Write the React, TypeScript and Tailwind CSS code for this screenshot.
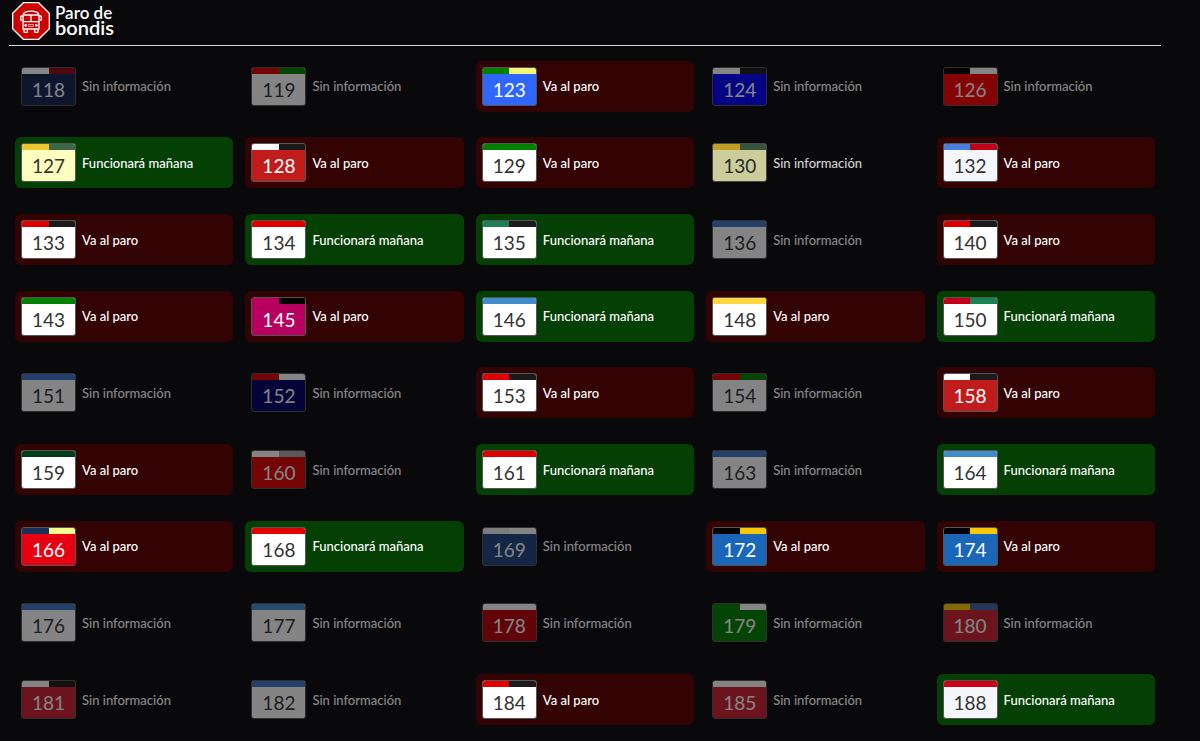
type Status = 'strike' | 'running' | 'unknown'

interface Line {
  num: number
  status: Status
  body: string
  stripe: string[]
  light?: boolean
  active?: boolean
}

const LABELS: Record<Status, string> = {
  strike: 'Va al paro',
  running: 'Funcionará mañana',
  unknown: 'Sin información',
}

const CARD_STYLES: Record<Status, string> = {
  strike: 'bg-[#330303]',
  running: 'bg-[#043f04]',
  unknown: '',
}

// `light` means light digits over a dark body
const lines: Line[] = [
  { num: 118, status: 'unknown', body: '#142452', stripe: ['#ffffff', '#8f0c14'], light: true },
  { num: 119, status: 'unknown', body: '#ffffff', stripe: ['#e00000', '#008000'] },
  { num: 123, status: 'strike', body: '#2e66ff', stripe: ['#008000', '#f5f57a'], light: true },
  { num: 124, status: 'unknown', body: '#0000ff', stripe: ['#ffffff', '#1a1a1a'], light: true },
  { num: 126, status: 'unknown', body: '#ff0000', stripe: ['#000000', '#ffffff'], light: true },
  { num: 127, status: 'running', body: '#ffffbf', stripe: ['#edc52f', '#40664a'] },
  { num: 128, status: 'strike', body: '#c01c1c', stripe: ['#ffffff', '#1a1a1a'], light: true },
  { num: 129, status: 'strike', body: '#ffffff', stripe: ['#008000'] },
  { num: 130, status: 'unknown', body: '#ffffbf', stripe: ['#edc52f', '#40664a'], active: true },
  { num: 132, status: 'strike', body: '#f4f6fb', stripe: ['#4a80db', '#c00018'] },
  { num: 133, status: 'strike', body: '#ffffff', stripe: ['#e00000', '#1a1a1a'] },
  { num: 134, status: 'running', body: '#ffffff', stripe: ['#e00000'] },
  { num: 135, status: 'running', body: '#ffffff', stripe: ['#1c8055', '#1a1a1a'] },
  { num: 136, status: 'unknown', body: '#ffffff', stripe: ['#4078c8'] },
  { num: 140, status: 'strike', body: '#ffffff', stripe: ['#e00000', '#1a1a1a'] },
  { num: 143, status: 'strike', body: '#ffffff', stripe: ['#008000'] },
  { num: 145, status: 'strike', body: '#b80060', stripe: ['#b80060', '#000000'], light: true },
  { num: 146, status: 'running', body: '#ffffff', stripe: ['#428bca'] },
  { num: 148, status: 'strike', body: '#ffffff', stripe: ['#ffd740'] },
  { num: 150, status: 'running', body: '#ffffff', stripe: ['#c00018', '#1c8055'] },
  { num: 151, status: 'unknown', body: '#ffffff', stripe: ['#4078c8'] },
  { num: 152, status: 'unknown', body: '#000066', stripe: ['#e00000', '#ffffff'], light: true },
  { num: 153, status: 'strike', body: '#ffffff', stripe: ['#e00000', '#1a1a1a'] },
  { num: 154, status: 'unknown', body: '#ffffff', stripe: ['#e00000', '#008000'] },
  { num: 158, status: 'strike', body: '#c01c1c', stripe: ['#ffffff', '#1a1a1a'], light: true },
  { num: 159, status: 'strike', body: '#ffffff', stripe: ['#003d1a'] },
  { num: 160, status: 'unknown', body: '#e00000', stripe: ['#ffffff', '#a8a8a8'], light: true },
  { num: 161, status: 'running', body: '#ffffff', stripe: ['#e00000'] },
  { num: 163, status: 'unknown', body: '#ffffff', stripe: ['#4078c8'] },
  { num: 164, status: 'running', body: '#ffffff', stripe: ['#428bca'] },
  { num: 166, status: 'strike', body: '#e60012', stripe: ['#1a2f5c', '#fcfc8c'], light: true },
  { num: 168, status: 'running', body: '#ffffff', stripe: ['#e00000'] },
  { num: 169, status: 'unknown', body: '#204480', stripe: ['#f0f0f0', '#ffffff'], light: true },
  { num: 172, status: 'strike', body: '#1a66b8', stripe: ['#000000', '#fac800'], light: true },
  { num: 174, status: 'strike', body: '#1a66b8', stripe: ['#000000', '#fac800'], light: true },
  { num: 176, status: 'unknown', body: '#ffffff', stripe: ['#4078c8'] },
  { num: 177, status: 'unknown', body: '#ffffff', stripe: ['#428bca'] },
  { num: 178, status: 'unknown', body: '#b80006', stripe: ['#ffffff'], light: true },
  { num: 179, status: 'unknown', body: '#008000', stripe: ['#008000', '#ffffff'], light: true },
  { num: 180, status: 'unknown', body: '#cc2030', stripe: ['#fac800', '#4068a8'], light: true },
  { num: 181, status: 'unknown', body: '#cc2030', stripe: ['#ffffff', '#1a1a1a'], light: true },
  { num: 182, status: 'unknown', body: '#ffffff', stripe: ['#4078c8'] },
  { num: 184, status: 'strike', body: '#ffffff', stripe: ['#e00000', '#1a1a1a'] },
  { num: 185, status: 'unknown', body: '#cc2030', stripe: ['#ffffff'], light: true },
  { num: 188, status: 'running', body: '#f4f6fb', stripe: ['#cc0018'] },
]

function BusLogo() {
  return (
    <svg viewBox="0 0 114 114" className="size-[38px]" fill="none" stroke="#fff" aria-hidden="true">
      <polygon
        points="34,2 80,2 112,34 112,80 80,112 34,112 2,80 2,34"
        fill="#cc0000"
        strokeWidth="4"
      />
      <g strokeWidth="4" strokeLinejoin="round" strokeLinecap="round">
        <path d="M33 81V42Q33 34 38 31Q57 24 76 31Q81 34 81 42V81Z" />
        <path d="M33 59H81M57 39V59M36 39H78" />
        <path d="M33 42H28Q26 42 26 45V54H29M81 42H86Q88 42 88 45V54H85" />
        <path d="M36 82V89Q36 91 38 91H44Q46 91 46 89V82M68 82V89Q68 91 70 91H76Q78 91 78 89V82" />
      </g>
      <rect x="50" y="68" width="14" height="5" strokeWidth="2" />
      <circle cx="41" cy="70" r="4" fill="#fff" stroke="none" />
      <circle cx="73" cy="70" r="4" fill="#fff" stroke="none" />
    </svg>
  )
}

function LineBadge({ line }: { line: Line }) {
  return (
    <div
      className="flex h-[39px] w-[55px] shrink-0 flex-col overflow-hidden rounded-[3px] border border-[#555555]"
      style={{ backgroundColor: line.body }}
    >
      <div className="flex h-1.5 shrink-0">
        {line.stripe.map((color, i) => (
          <span key={i} className="flex-1" style={{ backgroundColor: color }} />
        ))}
      </div>
      <span
        className={`pt-1 text-center text-[19px] leading-6 ${line.light ? 'text-white' : 'text-[#333333]'}`}
      >
        {line.num}
      </span>
    </div>
  )
}

function LineCard({ line }: { line: Line }) {
  const dim = line.status !== 'unknown' ? '' : line.active ? 'opacity-80' : 'opacity-50'
  return (
    <li
      className={`mx-1.5 flex items-center gap-1.5 rounded-md p-1.5 text-white ${CARD_STYLES[line.status]} ${dim}`}
    >
      <LineBadge line={line} />
      <span className="text-[13px] leading-4 font-medium">{LABELS[line.status]}</span>
    </li>
  )
}

export default function App() {
  return (
    <div className="flex min-h-screen flex-col bg-[#09090b] pb-[3px] font-['Lato','Liberation_Sans',sans-serif]">
      <div className="ml-[9px] flex w-[96%] flex-1 flex-col">
        <header className="flex items-center gap-[5px] border-b border-[#d4d4d4] px-[3px] pt-0.5 pb-[5px] text-white">
          <BusLogo />
          <h1 className="flex flex-col pb-0.5 font-semibold">
            <span className="text-[17px] leading-[14px]">Paro de</span>
            <span className="text-[20px] leading-[14px]">bondis</span>
          </h1>
        </header>
        <ul className="mt-0.5 grid flex-1 auto-rows-fr grid-cols-5 items-center">
          {lines.map((line) => (
            <LineCard key={line.num} line={line} />
          ))}
        </ul>
      </div>
    </div>
  )
}
